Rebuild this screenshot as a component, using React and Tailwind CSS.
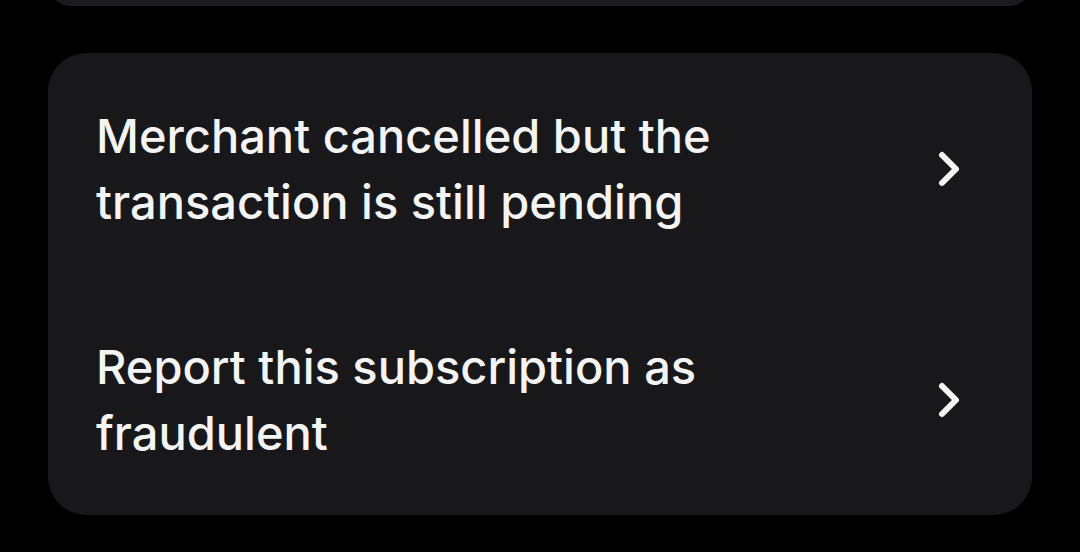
export default function App() {
  const items = [
    ["Merchant cancelled but the", "transaction is still pending"],
    ["Report this subscription as", "fraudulent"],
  ];
  return (
    <div className="w-[1080px] h-[552px] bg-black overflow-hidden px-[48px]" style={{ fontFamily: "Inter, 'Noto Sans', sans-serif" }}>
      <div className="h-[46px] -mt-[40px] rounded-[40px] bg-[#1c1c1f]" />
      <div className="mt-[47px] rounded-[38px] bg-[#18181a] flex flex-col">
        {items.map((lines, i) => (
          <div key={i} className="h-[231px] flex items-center justify-between pl-[48px] pr-[66px]">
            <div className="text-[47px] leading-[66px] font-medium text-[#f4f4f5]">
              {lines.map((l, j) => (
                <div key={j}>{l}</div>
              ))}
            </div>
            <svg width="36" height="40" viewBox="0 0 36 40" fill="none">
              <path d="M12 6 L26 20 L12 34" stroke="#f4f4f5" strokeWidth="6" strokeLinecap="round" strokeLinejoin="round" />
            </svg>
          </div>
        ))}
      </div>
    </div>
  );
}
